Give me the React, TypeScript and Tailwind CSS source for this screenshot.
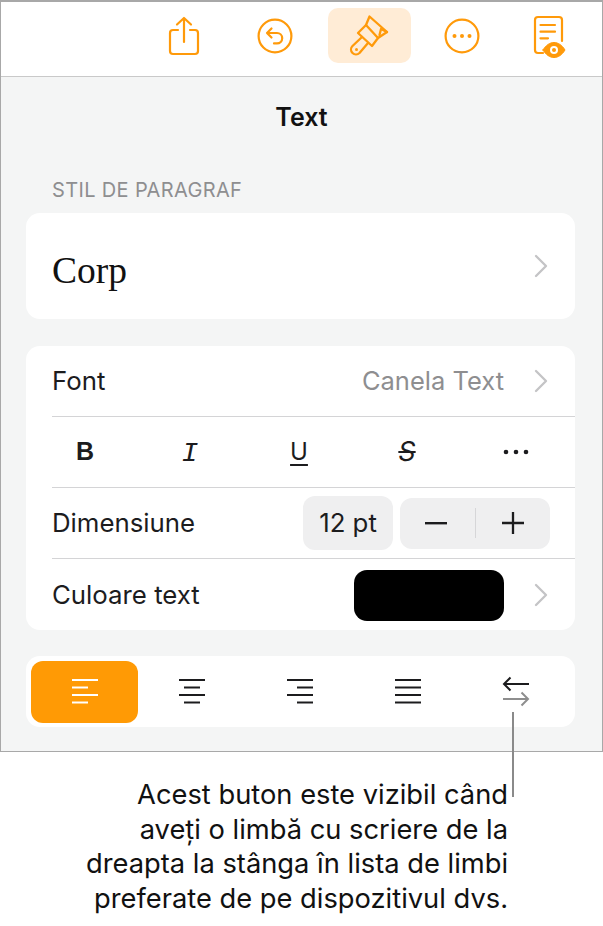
import React from "react";
import { ChevronRight } from "lucide-react";

const Chevron = () => (
  <ChevronRight className="w-[40px] h-[40px] text-[#c4c4c6] -mr-[10px] shrink-0" strokeWidth={1.4} />
);

const AlignIcon = ({ rows, color = "#1c1c1e" }: { rows: [number, number][]; color?: string }) => (
  <svg width="28" height="26" viewBox="0 0 28 26" fill="none" stroke={color} strokeWidth="2">
    {rows.map(([a, b], i) => (
      <line key={i} x1={a} x2={b} y1={1 + i * 7.5} y2={1 + i * 7.5} />
    ))}
  </svg>
);

const Toolbar = () => (
  <div className="h-[75px] bg-white border-b border-[#c9c9c9] flex items-start pt-[6px] pl-[153px]">
    <div className="w-[60px] h-[55px] flex items-center justify-center">
      <svg width="32" height="40" viewBox="0 0 32 40" fill="none" stroke="#ff9a0a" strokeWidth="2.2" strokeLinecap="round" strokeLinejoin="round">
        <path d="M10 14H5a3 3 0 0 0-3 3v18a3 3 0 0 0 3 3h22a3 3 0 0 0 3-3V17a3 3 0 0 0-3-3h-5" />
        <path d="M16 26V2M9 8.5 16 2l7 6.5" />
      </svg>
    </div>
    <div className="ml-[31px] w-[60px] h-[55px] flex items-center justify-center">
      <svg width="36" height="36" viewBox="0 0 36 36" fill="none" stroke="#ff9a0a" strokeWidth="2.2" strokeLinecap="round" strokeLinejoin="round">
        <circle cx="18" cy="18" r="16.4" />
        <path d="M14.5 10.5 10 15l4.5 4.5M10 15h10a5.2 5.2 0 0 1 0 10.4h-3" />
      </svg>
    </div>
    <div className="ml-[23px] w-[83px] h-[55px] bg-[#ffecd6] rounded-[10px] flex items-center justify-center">
      <svg width="60" height="52" viewBox="0 0 60 52" fill="none" stroke="#ff9a0a" strokeWidth="2.3" strokeLinecap="round" strokeLinejoin="round">
        <path d="M26 15 29.500 6.500 47 22l-9 6" />
        <path d="M47 22l-6-3-1.500 6" />
        <path d="M26 15l-8 8 14 13 6-8z" />
        <path d="M22 27l-9.500 9a4.800 4.800 0 0 0 7 7L28 33" />
        <circle cx="16.500" cy="39.500" r="1.500" fill="#ff9a0a" stroke="none" />
      </svg>
    </div>
    <div className="ml-[21px] w-[60px] h-[55px] flex items-center justify-center">
      <svg width="36" height="36" viewBox="0 0 36 36" fill="none" stroke="#ff9a0a" strokeWidth="2.2">
        <circle cx="18" cy="18" r="16.4" />
        <circle cx="10.500" cy="18" r="2" fill="#ff9a0a" stroke="none" />
        <circle cx="18" cy="18" r="2" fill="#ff9a0a" stroke="none" />
        <circle cx="25.500" cy="18" r="2" fill="#ff9a0a" stroke="none" />
      </svg>
    </div>
    <div className="ml-[33px] w-[50px] h-[55px] flex items-center justify-center">
      <svg width="50" height="52" viewBox="0 0 50 52" fill="none" stroke="#ff9a0a" strokeWidth="2.2" strokeLinecap="round" strokeLinejoin="round">
        <path d="M18 43h-5a3 3 0 0 1-3-3V10a3 3 0 0 1 3-3h21a3 3 0 0 1 3 3v21" />
        <path d="M15.500 15H30M15.500 21.700H30M15.500 28.300H23" />
        <path d="M18 40c3-5 7-7.500 11-7.500s8 2.500 11 7.500c-3 5-7 7.500-11 7.500s-8-2.500-11-7.500z" fill="#ff9a0a" strokeWidth="1" />
        <circle cx="29" cy="40" r="4" fill="white" stroke="none" />
        <circle cx="29" cy="40" r="2" fill="#ff9a0a" stroke="none" />
      </svg>
    </div>
  </div>
);

const Row = ({ children, last }: { children: React.ReactNode; last?: boolean }) => (
  <div className="pl-[26px]">
    <div className={`h-[71px] flex items-center pr-[24px] ${last ? "" : "border-b border-[#d4d4d6]"}`}>{children}</div>
  </div>
);

export default function App() {
  return (
    <div className="w-[603px] h-[926px] bg-white font-['Inter','Liberation_Sans',sans-serif] text-[#1c1c1e] relative overflow-hidden">
      <div className="h-[752px] bg-[#f4f5f5] border border-[#a8a8a8] border-t-2">
        <Toolbar />
        <h1 className="text-center text-[25px] font-semibold leading-[30px] mt-[25px] text-[#111]">Text</h1>
        <div className="mt-[46px] ml-[51px] text-[20px] leading-[24px] text-[#8e8e90] tracking-[0.35px]">STIL DE PARAGRAF</div>
        <div className="ml-[25px] mr-[27px] mt-[11px] h-[106px] bg-white rounded-[14px] flex items-center justify-between pl-[26px] pr-[24px]">
          <span className="font-['Liberation_Serif',serif] text-[37.500px] text-[#111] pt-[10px]">Corp</span>
          <Chevron />
        </div>
        <div className="ml-[25px] mr-[27px] mt-[27px] bg-white rounded-[14px]">
          <Row>
            <span className="text-[25.800px]">Font</span>
            <span className="ml-auto text-[25.500px] text-[#8e8e90] mr-[17px]">Canela Text</span>
            <Chevron />
          </Row>
          <Row>
            <div className="ml-[21px] flex items-center">
              <span className="w-[24px] text-center font-bold text-[25px] font-['Liberation_Sans',sans-serif]">B</span>
              <span className="w-[24px] ml-[81px] pt-[4px] text-center italic text-[28px] leading-[30px] font-['Liberation_Mono',monospace]">I</span>
              <span className="w-[24px] ml-[85px] text-center text-[24px] underline underline-offset-[4px] decoration-[1.500px]">U</span>
              <span className="w-[24px] ml-[84px] text-center text-[27px] italic line-through">S</span>
              <svg className="ml-[84px]" width="26" height="6" viewBox="0 0 26 6" fill="#1c1c1e">
                <circle cx="3" cy="3" r="2.300" />
                <circle cx="13" cy="3" r="2.300" />
                <circle cx="23" cy="3" r="2.300" />
              </svg>
            </div>
          </Row>
          <Row>
            <span className="text-[25.800px]">Dimensiune</span>
            <div className="ml-auto w-[90px] h-[54px] bg-[#efeff0] rounded-[12px] flex items-center justify-center text-[25.800px]">12 pt</div>
            <div className="ml-[7px] mr-[1px] w-[150px] h-[51px] bg-[#efeff0] rounded-[12px] flex items-center">
              <svg className="ml-[25px]" width="22" height="3" viewBox="0 0 22 3"><rect width="22" height="2.400" fill="#1c1c1e" /></svg>
              <div className="ml-[28px] w-px h-[30px] bg-[#d6d6d8]" />
              <svg className="ml-[25px]" width="24" height="24" viewBox="0 0 24 24" fill="none" stroke="#1c1c1e" strokeWidth="2.300">
                <path d="M12 1v22M1 12h22" />
              </svg>
            </div>
          </Row>
          <Row last>
            <span className="text-[25.800px] pt-[2px]">Culoare text</span>
            <div className="ml-auto mt-[2px] w-[150px] h-[51px] bg-black rounded-[13px] mr-[17px]" />
            <Chevron />
          </Row>
        </div>
        <div className="ml-[25px] mr-[27px] mt-[26px] h-[71px] bg-white rounded-[14px] flex items-center pl-[5px]">
          <div className="w-[107px] h-[62px] bg-[#ff9a05] rounded-[12px] flex items-center justify-center">
            <AlignIcon color="#ffffff" rows={[[1, 27], [1, 17], [1, 27], [1, 17]]} />
          </div>
          <div className="w-[108px] flex justify-center">
            <AlignIcon rows={[[1, 27], [6, 22], [1, 27], [6, 22]]} />
          </div>
          <div className="w-[108px] flex justify-center">
            <AlignIcon rows={[[1, 27], [11, 27], [1, 27], [11, 27]]} />
          </div>
          <div className="w-[108px] flex justify-center">
            <AlignIcon rows={[[1, 27], [1, 27], [1, 27], [1, 27]]} />
          </div>
          <div className="w-[108px] flex justify-center">
            <svg width="28" height="34" viewBox="0 0 28 34" fill="none" strokeWidth="2">
              <path d="M27 9H2M8.500 2.500 2 9l6.500 6.500" stroke="#1c1c1e" />
              <path d="M1 24h25M19.500 17.500 26 24l-6.500 6.500" stroke="#8e8e8e" />
            </svg>
          </div>
        </div>
      </div>
      <div className="absolute left-[512px] top-[712px] w-[2px] h-[85px] bg-[#8a8a8a]" />
      <p className="mt-[26px] w-[508px] text-right text-[27.300px] leading-[34.700px] text-[#111]">
        Acest buton este vizibil când
        <br />
        aveți o limbă cu scriere de la
        <br />
        dreapta la stânga în lista de limbi
        <br />
        preferate de pe dispozitivul dvs.
      </p>
    </div>
  );
}
